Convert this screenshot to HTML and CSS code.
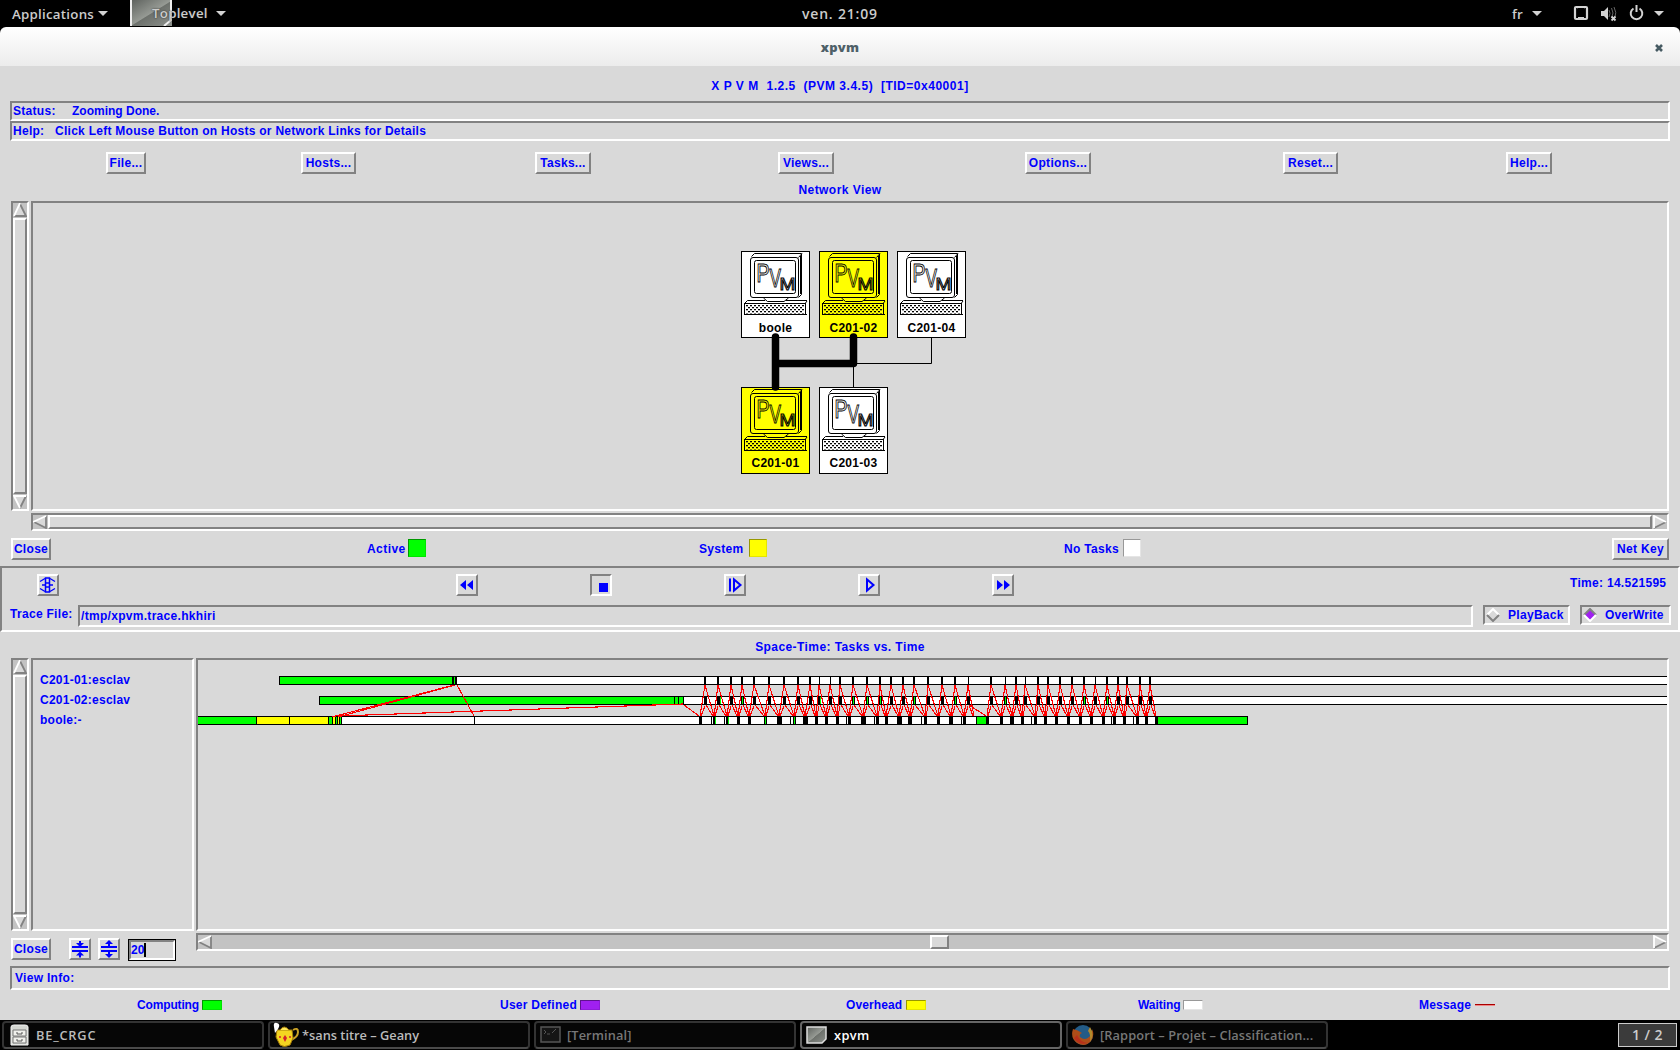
FILE: index.html
```html
<!DOCTYPE html>
<html lang="fr">
<head>
<meta charset="utf-8">
<title>xpvm</title>
<link rel="stylesheet" href="styles.css">
</head>
<body>
<svg width="0" height="0" class="defs">
  <defs>
    <pattern id="keys" x="5" y="54" width="4" height="4" patternUnits="userSpaceOnUse">
      <rect x="0" y="0" width="2" height="1.3"/><rect x="2" y="2" width="2" height="1.3"/>
    </pattern>
    <linearGradient id="steel" x1="0" y1="0" x2="1" y2="1">
      <stop offset="0" stop-color="#5c605c"/><stop offset=".5" stop-color="#969a94"/><stop offset=".52" stop-color="#6d716c"/><stop offset="1" stop-color="#8d918c"/>
    </linearGradient>
    <symbol id="pc" viewBox="0 0 69 87">
      <g fill="none" stroke="#000" stroke-width="1">
        <rect x="9.5" y="6.5" width="48" height="40" rx="2.5"/>
        <path d="M10.5 5.500L13.500 2.500H60.500V43.500L57.500 46.500M57.500 6.500L61 2.500M59.500 5V43"/>
        <rect x="13.500" y="9.500" width="41" height="33" rx="2"/>
        <path d="M22.500 47L26.500 50.500H43L47.500 47M3.500 52.500L6.500 49.500H24M45 49.500H66M64.500 52L66 50M64 63.500H66"/>
        <rect x="3.500" y="52.500" width="61" height="11"/>
      </g>
      <rect x="5" y="54" width="58" height="8.500" fill="url(#keys)"/>
      <g fill="none" stroke="#000" stroke-width="1" opacity=".99" font-family="Liberation Sans" font-weight="400" letter-spacing="0" font-size="25">
        <text x="15.500" y="31" textLength="13" lengthAdjust="spacingAndGlyphs">P</text>
        <text x="28.500" y="36" textLength="11.500" lengthAdjust="spacingAndGlyphs">V</text>
        <text x="38.500" y="39" font-size="17" textLength="16" lengthAdjust="spacingAndGlyphs">M</text>
      </g>
    </symbol>
  </defs>
</svg>

<header class="panel">
  <span>Applications</span><i class="caret"></i>
  <span class="toplevel"><svg class="app-icon" width="42" height="26"><rect width="42" height="26" fill="url(#steel)"/><path d="M1 0V26M41 0V20L34 26" stroke="#eee" stroke-width="2" fill="none"/></svg><b>Toplevel</b></span><i class="caret"></i>
  <span class="clock">ven. 21:09</span>
  <span>fr</span><i class="caret"></i>
  <svg width="92" height="27" fill="none" stroke="#d3d3d3">
    <rect x="2" y="7" width="12" height="12" rx="1" stroke-width="2.200"/><path d="M4 8l2-1M12 8l-2-1M5 17.500h6" stroke-width="1"/>
    <path d="M28 11h3l4-4v13l-4-4h-3z" fill="#d3d3d3" stroke="none"/><path d="M36 10q2 3 0 7M38.500 8q3 5 0 10M41 7q3 6 1 10" stroke="#666"/><path d="M38.500 16.500l4 4M42.500 16.500l-4 4" stroke-width="1.800"/>
    <path d="M60.500 8.500a5.800 5.800 0 1 0 6 0M63.500 5v7" stroke-width="2"/>
    <path d="M81 11h10l-5 5z" fill="#d3d3d3" stroke="none"/>
  </svg>
</header>

<div class="titlewrap"><div class="titlebar"><b>xpvm</b><svg width="8" height="8"><path d="M1 1l6 6M7 1l-6 6" stroke="#465a62" stroke-width="2.600"/></svg></div></div>

<main class="window">
  <h1>X P V M&nbsp; 1.2.5&nbsp; (PVM 3.4.5)&nbsp; [TID=0x40001]</h1>
  <div class="field sunken"><span>Status:</span><span class="status">Zooming Done.</span></div>
  <div class="field help sunken"><span>Help:</span><span>Click Left Mouse Button on Hosts or Network Links for Details</span></div>
  <nav class="menu"><button>File...</button><button>Hosts...</button><button>Tasks...</button><button>Views...</button><button>Options...</button><button>Reset...</button><button>Help...</button></nav>
  <h2 class="net-title">Network View</h2>

  <section class="net">
    <div class="scroll vertical sunken">
      <svg class="arrow" viewBox="0 0 14 14"><path d="M7 1L13 13H1z" fill="#d9d9d9"/><path d="M7 1L13 13H1" stroke="#828282"/><path d="M7 0L1 13" stroke="#fff"/></svg>
      <div class="thumb raised"></div>
      <svg class="arrow" viewBox="0 0 14 14"><path d="M1 1H13L7 13z" fill="#d9d9d9"/><path d="M13 1L7 13" stroke="#828282"/><path d="M13 1H1L7 13" stroke="#fff"/></svg>
    </div>
    <svg class="canvas sunken" viewBox="33 203 1634 306" id="network"></svg>
    <div class="scroll horizontal sunken">
      <svg class="arrow" viewBox="0 0 14 14"><path d="M13 1V13L1 7z" fill="#d9d9d9"/><path d="M13 1V13L1 7" stroke="#828282"/><path d="M13 1L0 7" stroke="#fff"/></svg>
      <div class="thumb raised"></div>
      <svg class="arrow" viewBox="0 0 14 14"><path d="M1 1V13L13 7z" fill="#d9d9d9"/><path d="M1 13L13 7" stroke="#828282"/><path d="M1 13V1L13 7" stroke="#fff"/></svg>
    </div>
  </section>

  <div class="netkey"><button>Close</button><span>Active</span><i class="swatch green"></i><span>System</span><i class="swatch yellow"></i><span>No Tasks</span><i class="swatch white"></i><button>Net Key</button></div>

  <section class="player sunken">
    <div class="transport">
      <button class="icon"><svg viewBox="0 0 18 18" fill="none" stroke="#00f"><path d="M6.500 2h4v14h-4zM6.500 7h4M6.500 11h4" stroke-width="1.500"/><path d="M1 5.500l5-3M16 5.500l-5-3M1 12.500l5 3M16 12.500l-5 3" stroke-width="1.300"/><path d="M3 9h3M11 9h3" stroke-width="1.300"/></svg></button>
      <button class="icon"><svg viewBox="0 0 18 18" fill="#00f"><path d="M8 4v10l-6-5zM15 4v10l-6-5z"/></svg></button>
      <button class="icon pressed"><svg viewBox="0 0 18 18"><path d="M7 7h9v9H7z" fill="#00f"/></svg></button>
      <button class="icon"><svg viewBox="0 0 18 18" fill="none" stroke="#00f"><path d="M4 2.500v13" stroke-width="2"/><path d="M8 3.500v11l6.500-5.500z" stroke-width="2"/></svg></button>
      <button class="icon"><svg viewBox="0 0 18 18" fill="none" stroke="#00f"><path d="M7 3.500v11l6.500-5.500z" stroke-width="2"/></svg></button>
      <button class="icon"><svg viewBox="0 0 18 18" fill="#00f"><path d="M3 4v10l6-5zM10 4v10l6-5z"/></svg></button>
      <span>Time: 14.521595</span>
    </div>
    <div class="trace">
      <span>Trace File:</span><span class="sunken path">/tmp/xpvm.trace.hkhiri</span>
      <span class="sunken radio"><svg width="14" height="14"><path d="M1 7L7 1L13 7L7 13z" fill="#d9d9d9"/><path d="M1 7L7 1L13 7" stroke="#fff" stroke-width="2" fill="none"/><path d="M1 7L7 13L13 7" stroke="#828282" stroke-width="2" fill="none"/></svg>PlayBack</span>
      <span class="sunken radio"><svg width="14" height="14"><path d="M1 7L7 1L13 7L7 13z" fill="#a020f0"/><path d="M1 7L7 1L13 7" stroke="#828282" stroke-width="2" fill="none"/><path d="M1 7L7 13L13 7" stroke="#fff" stroke-width="2" fill="none"/></svg>OverWrite</span>
    </div>
  </section>

  <h2 class="st-title">Space-Time: Tasks vs. Time</h2>

  <section class="spacetime">
    <div class="scroll vertical sunken">
      <svg class="arrow" viewBox="0 0 14 14"><path d="M7 1L13 13H1z" fill="#d9d9d9"/><path d="M7 1L13 13H1" stroke="#828282"/><path d="M7 0L1 13" stroke="#fff"/></svg>
      <div class="thumb raised"></div>
      <svg class="arrow" viewBox="0 0 14 14"><path d="M1 1H13L7 13z" fill="#d9d9d9"/><path d="M13 1L7 13" stroke="#828282"/><path d="M13 1H1L7 13" stroke="#fff"/></svg>
    </div>
    <div class="tasks sunken"><p>C201-01:esclav</p><p>C201-02:esclav</p><p>boole:-</p></div>
    <svg class="canvas sunken" viewBox="198 660 1469 269" id="timeline" shape-rendering="crispEdges"></svg>
    <div class="controls">
      <button>Close</button>
      <button class="icon"><svg viewBox="0 0 18 18" fill="#00f"><path d="M1 6h16v2H1zM1 10h16v2H1zM8 1h2v2h3l-4 4-4-4h3zM9 11.500l4 4h-3v2H8v-2H5z"/></svg></button>
      <button class="icon"><svg viewBox="0 0 18 18" fill="#00f"><path d="M1 6h16v2H1zM1 10h16v2H1zM9 0l4 4h-3v2H8V4H5zM8 12h2v2h3l-4 4-4-4h3z"/></svg></button>
      <span class="entry"><span class="sunken">20<i></i></span></span>
    </div>
    <div class="scroll horizontal sunken">
      <svg class="arrow" viewBox="0 0 14 14"><path d="M13 1V13L1 7z" fill="#d9d9d9"/><path d="M13 1V13L1 7" stroke="#828282"/><path d="M13 1L0 7" stroke="#fff"/></svg>
      <div class="thumb short raised"></div>
      <svg class="arrow" viewBox="0 0 14 14"><path d="M1 1V13L13 7z" fill="#d9d9d9"/><path d="M1 13L13 7" stroke="#828282"/><path d="M1 13V1L13 7" stroke="#fff"/></svg>
    </div>
  </section>

  <div class="field info sunken"><span>View Info:</span></div>
  <div class="legend"><span>Computing</span><i class="swatch green"></i><span>User Defined</span><i class="swatch purple"></i><span>Overhead</span><i class="swatch yellow"></i><span>Waiting</span><i class="swatch white"></i><span>Message</span><i class="redline"></i></div>
</main>

<footer class="taskbar">
  <div class="task"><svg width="20" height="24"><path d="M1 22V4q0-2 3-2h11q3 0 3 2V22z" fill="#d5d7d2" stroke="#f4f4f4"/><path d="M3 7h13v6H3zM3 14h13v6H3z" fill="#f0f0ec" stroke="#777"/><path d="M7 9v2h5V9M7 16v2h5v-2" fill="none" stroke="#555"/></svg><span>BE_CRGC</span></div>
  <div class="task"><svg width="26" height="26"><path d="M20 8q5-3 5 2t-7 8" fill="none" stroke="#c9a227" stroke-width="2"/><path d="M4 8h15l1 8-3 7q-6 3-10 0l-4-8z" fill="#f4d421" stroke="#a57c08"/><path d="M7 8q4-6 9 0" fill="#ffe95a" stroke="#a57c08"/><path d="M2 11L1 5q-1-5 3-4t1 6z" fill="#fff"/><path d="M12 13l2 3-2 4-2-4z" fill="#d3202a"/><circle cx="7" cy="15" r="1" fill="#d3202a"/><circle cx="17" cy="15" r="1" fill="#d3202a"/></svg><span>*sans titre – Geany</span></div>
  <div class="task dim"><svg width="22" height="20"><rect x="1" y="2" width="19" height="15" fill="#151515" stroke="#555" stroke-width="1.500"/><path d="M4 5l2 2-2 2M7 9h3M12 8l4-4" stroke="#555" fill="none"/></svg><span>[Terminal]</span></div>
  <div class="task active"><svg width="22" height="20"><path d="M1 2H20V14L16 18H1z" fill="url(#steel)" stroke="#ddd" stroke-width="1.500"/></svg><span>xpvm</span></div>
  <div class="task dim"><svg width="24" height="24"><circle cx="12" cy="12" r="10" fill="#235b87"/><path d="M2 6q-3 9 4 14 8 5 14-2 4-6 1-12 0 6-3 8-4 4-9 0-1-3 2-4-4-3-9-4z" fill="#ad4d18"/><path d="M3 15q5 8 14 5-8-1-11-8z" fill="#b8301b"/><path d="M19 4q5 8 0 15 1-8-2-11z" fill="#b38a2c"/></svg><span>[Rapport – Projet – Classification...</span></div>
  <div class="pager">1 / 2</div>
</footer>
<script src="app.js"></script>
</body>
</html>
```
FILE: styles.css
```css
* { box-sizing: border-box; }
body { margin: 0; width: 1680px; height: 1050px; overflow: hidden; background: #000; font: bold 12px/14px "Liberation Sans", Arial, sans-serif; letter-spacing: .3px; color: #00f; white-space: nowrap; }
.defs { display: block; position: absolute; }
svg { display: block; flex: none; }
h1, h2, p { margin: 0; font-size: 12px; line-height: 14px; }
h1, h2 { text-align: center; }

.panel { height: 27px; display: grid; grid-template-columns: 86px 32px 86px 586px 710px 20px 41px 92px; align-items: center; padding-left: 12px; color: #ccc; background: #000; font: 600 13.3px/26px "Open Sans", sans-serif; letter-spacing: .25px; }
.caret { width: 0; height: 0; border: 5px solid transparent; border-top-color: #d3d3d3; border-bottom: 0; }
.toplevel { display: grid; height: 27px; }
.toplevel > * { grid-area: 1 / 1; }
.toplevel b { font-weight: 600; padding-left: 22px; text-shadow: 0 0 2px #222; }
.clock { font-size: 14px; letter-spacing: .8px; }
.titlewrap { height: 39px; background: #000; }
.titlebar { height: 39px; display: grid; grid-template-columns: 1fr 8px; padding: 0 17px 0 25px; border-radius: 6px 6px 0 0; background: linear-gradient(#fff, #ececec); color: #4e6068; font: 600 13px/41px "Open Sans", sans-serif; align-items: center; text-align: center; }
.titlebar svg { margin-top: 1px; }

.window { height: 954px; background: #d9d9d9; display: flex; flex-direction: column; }
.sunken { border: 2px solid; border-color: #828282 #fff #fff #828282; }
.raised { border: 2px solid; border-color: #fff #828282 #828282 #fff; background: #d9d9d9; }
h1 { height: 35px; padding-top: 13px; letter-spacing: .52px; }
.field { height: 20px; margin: 0 10px; padding-left: 1px; display: grid; grid-template-columns: 59px 1fr; align-items: center; }
.help { grid-template-columns: 42px 1fr; letter-spacing: .27px; }
.status { letter-spacing: 0; }
button { margin: 0; padding: 0; height: 22px; border: 2px solid; border-color: #fff #828282 #828282 #fff; background: #d9d9d9; color: #00f; font: inherit; letter-spacing: inherit; text-align: center; white-space: nowrap; }
.menu { display: flex; margin-top: 11px; padding-left: 106px; }
.menu button:nth-child(1) { width: 40px; margin-right: 155px; }
.menu button:nth-child(2) { width: 55px; margin-right: 179px; }
.menu button:nth-child(3) { width: 56px; margin-right: 187px; }
.menu button:nth-child(4) { width: 56px; margin-right: 191px; }
.menu button:nth-child(5) { width: 66px; margin-right: 192px; }
.menu button:nth-child(6) { width: 55px; margin-right: 168px; }
.menu button:nth-child(7) { width: 46px; }
.net-title { height: 27px; padding-top: 9px; letter-spacing: .45px; }

.net { height: 330px; display: grid; grid-template: 310px 18px / 18px 1638px; gap: 2px; margin-left: 11px; }
.canvas { width: 100%; height: 100%; }
.scroll { display: flex; gap: 1px; background: #c3c3c3; }
.vertical { flex-direction: column; }
.net .horizontal { grid-column: 2; }
.arrow { width: 14px; height: 14px; fill: none; stroke-width: 1.8; }
.thumb { flex: 1; }
.thumb.short { flex: none; width: 19px; margin: 0 703px 0 717px; }

.netkey { height: 35px; padding: 7px 0 0 11px; display: grid; grid-template-columns: 356px 41px 291px 50px 315px 59px 489px 57px; }
.netkey button:first-child { width: 40px; }
.netkey span { padding-top: 4px; }
.netkey span:nth-of-type(1) { letter-spacing: .45px; }
.swatch { display: block; width: 18px; height: 18px; margin-top: 1px; border: 1px solid; border-color: rgba(0,0,0,.4) rgba(0,0,0,.1) rgba(0,0,0,.1) rgba(0,0,0,.4); }
.green { background-color: #0f0; }
.yellow { background-color: #ff0; }
.white { background-color: #fff; }
.purple { background-color: #a020f0; }

.player { height: 66px; }
.transport { height: 37px; padding: 6px 0 0 35px; display: grid; grid-template-columns: 419px 134px 134px 134px 134px 578px 100px; }
.icon { width: 22px; }
.icon svg { width: 18px; height: 18px; }
.pressed { border-color: #828282 #fff #fff #828282; }
.transport span { padding-top: 2px; }
.trace { height: 20px; padding-left: 8px; display: grid; grid-template-columns: 68px 1405px 97px 91px; }
.trace > span { line-height: 18px; }
.path { margin-right: 10px; padding-left: 1px; }
.radio { width: 87px; height: 20px; display: flex; align-items: center; gap: 8px; padding-left: 1px; }
.radio:last-child { width: 91px; letter-spacing: .15px; }
.st-title { height: 26px; padding-top: 8px; letter-spacing: .42px; }

.spacetime { height: 308px; display: grid; grid-template: 273px 33px / 18px 163px 1473px; gap: 2px; margin-left: 11px; }
.tasks { padding: 10px 0 0 7px; letter-spacing: .25px; }
.tasks p { line-height: 20px; }
.controls { grid-column: 1 / 3; display: flex; padding-top: 5px; }
.controls button:first-child { width: 40px; margin-right: 18px; }
.controls .icon { margin-right: 7px; }
.entry { width: 48px; height: 22px; border: 1px solid #000; margin: 1px 0 0 1px; }
.entry .sunken { display: flex; height: 20px; line-height: 17px; letter-spacing: 0; }
.entry i { width: 2px; height: 14px; margin-top: 1px; background: #000; }
.spacetime .horizontal { height: 18px; grid-column: 3; }

.info { height: 24px; padding-left: 3px; }
.legend { height: 30px; padding: 8px 0 0 137px; display: grid; grid-template-columns: 65px 298px 80px 266px 60px 232px 45px 236px 56px 20px; align-items: start; letter-spacing: .1px; }
.legend span:first-child { letter-spacing: -.15px; }
.legend span:nth-of-type(2) { letter-spacing: .25px; }
.legend span:nth-of-type(5) { letter-spacing: .2px; }
.legend span:nth-of-type(4) { letter-spacing: -.05px; }
.legend .swatch { width: 20px; height: 10px; margin-top: 2px; }
.redline { width: 20px; height: 2px; margin-top: 6px; background: #e88; border-top: 1px solid #a00; }

.taskbar { height: 30px; background: #000; padding: 1px 0 0 2px; display: flex; gap: 4px; color: #bbb; font: 600 12.8px/26px "Open Sans", sans-serif; letter-spacing: 0; }
.task { width: 262px; height: 28px; border: 2px solid #333; border-bottom-color: #4a4a4a; border-radius: 4px; background: #060606; display: flex; align-items: center; padding-left: 6px; gap: 6px; }
.task:first-child { letter-spacing: .8px; }
.task:nth-child(2) { padding-left: 3px; gap: 3px; }
.task:nth-child(3) { padding-left: 4px; gap: 5px; }
.active { border-color: #666; color: #fff; padding-left: 4px; letter-spacing: .4px; }
.dim { color: #777; letter-spacing: .1px; }
.dim:nth-child(5) { padding-left: 3px; gap: 5px; }
.pager { width: 59px; height: 24px; margin: 2px 0 0 286px; border: 1px solid #ccc; background: #3b3b3b; text-align: center; line-height: 22px; color: #ccc; font-size: 14px; letter-spacing: .5px; }
```
FILE: app.js
```js
const rect = (x, y, w, h, fill) => `<rect x="${x}" y="${y}" width="${w}" height="${h}" fill="${fill}"/>`;

// Network view: host cards and the links between them
const hosts = [
  ['boole', 741, 251, '#fff'], ['C201-02', 819, 251, '#ff0'], ['C201-04', 897, 251, '#fff'],
  ['C201-01', 741, 387, '#ff0'], ['C201-03', 819, 387, '#fff'],
];
document.getElementById('network').innerHTML =
  hosts.map(([name, x, y, fill]) =>
    `<rect x="${x + .5}" y="${y + .5}" width="68" height="86" fill="${fill}" stroke="#000"/>` +
    `<use href="#pc" x="${x}" y="${y}" width="69" height="87"/>` +
    `<text x="${x + 34.5}" y="${y === 387 ? y + 80 : y + 81}" text-anchor="middle" fill="#000">${name}</text>`).join('') +
  '<path d="M853.500 387V363.500H931.500V338" fill="none" stroke="#000"/>' +
  '<path d="M775.500 337V387M775.500 363.500H853.500V337" fill="none" stroke="#000" stroke-width="7.500" stroke-linecap="round" stroke-linejoin="round"/>';

// Space-time view: one bar per task, events in pixels
const peaks = [705, 718, 731, 742, 754, 769, 784, 798, 810, 819, 830, 840, 853, 867, 880, 891, 903, 914, 928, 942, 955, 968, 991, 1005, 1016, 1025, 1038, 1048, 1060, 1072, 1084, 1095, 1107, 1118, 1127, 1140, 1150];
const valleys = [700, 714, 727, 738, 749, 765, 779, 794, 805, 816, 826, 837, 849, 863, 877, 886, 899, 910, 925, 938, 951, 964, 987, 1001, 1012, 1022, 1035, 1045, 1056, 1068, 1080, 1091, 1103, 1114, 1124, 1137, 1146, 1156];
const thin = new Set([819, 830, 968, 1005, 1025, 1095]);
const busy = new Set([720, 742, 820, 853, 867, 880, 914, 955, 1005, 1084, 1107]);
const wide = new Set([779, 805, 863, 899]);
const extra = [711, 724, 790, 825, 846, 849, 874, 908, 921, 949, 961, 1010, 1031, 1111, 1133];
const green = '#0f0', black = '#000';

let out = '';
const bar = (x, y, end) => { out += rect(x, y, end - x, 9, black) + rect(x + 1, y + 1, end - x - 2, 7, '#fff'); };
bar(279, 676, 1669); bar(319, 696, 1669); bar(190, 716, 1248);
out += rect(280, 677, 172, 7, green) + rect(452, 677, 2, 7, black) + rect(454, 677, 1, 7, green) + rect(455, 677, 2, 7, black);
out += rect(320, 697, 364, 7, green);
for (const x of [674, 678, 683]) out += rect(x, 697, 1, 7, black);
out += rect(198, 717, 58, 7, green) + rect(257, 717, 71, 7, '#ff0') + rect(329, 717, 12, 7, green) + rect(333, 717, 2, 7, '#ff0') + rect(338, 717, 1, 7, '#ff0');
for (const x of [256, 289, 328, 332, 335, 337, 339, 341, 474]) out += rect(x, 717, 1, 7, black);
for (const x of peaks) {
  out += rect(thin.has(x) ? x : x - 1, 677, thin.has(x) ? 1 : 2, 7, black) + rect(x - 1, 697, 3, 7, black);
}
for (const x of busy) out += rect(x, 697, 1, 7, green);
for (const x of valleys) out += wide.has(x) ? rect(x - 2, 717, 5, 7, black) : rect(x - 1, 717, 3, 7, black);
for (const x of extra) out += rect(x, 717, 1, 7, black);
for (const x of [715, 728, 765, 794]) out += rect(x, 717, 1, 7, green);
out += rect(977, 717, 9, 7, green) + rect(976, 717, 1, 7, black) + rect(1158, 717, 89, 7, green);

let d = 'M454 685L332 717M455 685L338 717M457 685L474 716M338 716L683 704M684 705L699 716M969 705L986 716';
peaks.forEach((p, i) => {
  const a = valleys[i], b = i === 21 ? 974 : valleys[i + 1];
  d += `M${a} 716L${p} 685L${b} 716M${a + 1} 716L${p} 706M${p + 1} 705L${b - 1} 716`;
});
document.getElementById('timeline').innerHTML = out + `<path d="${d}" fill="none" stroke="#f00" stroke-width="1.1"/>`;
```
